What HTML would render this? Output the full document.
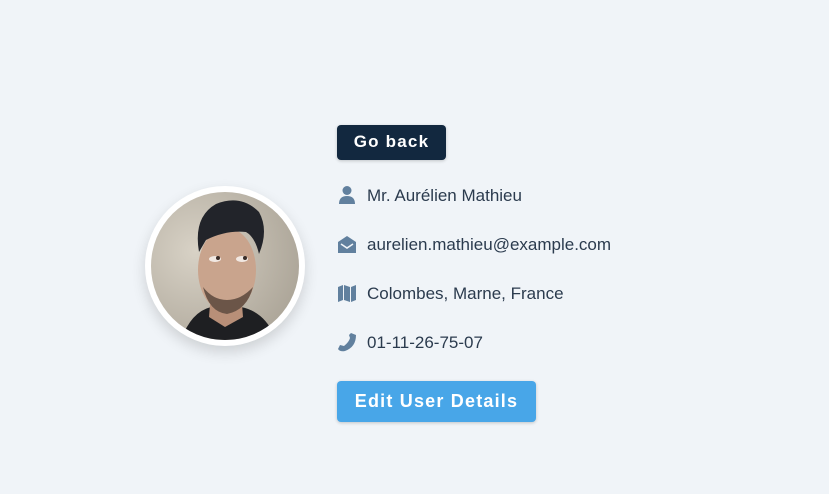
<!DOCTYPE html>
<html><head><style>
html,body{margin:0;padding:0;width:829px;height:494px;background:#f0f4f8;overflow:hidden;font-family:"Liberation Sans",sans-serif}
.av{position:absolute;left:145px;top:186px;width:160px;height:160px;border-radius:50%;background:#fff;box-shadow:0 6px 14px rgba(0,0,0,.15)}
.av svg{position:absolute;left:6px;top:6px}
.btn{position:absolute;left:337px;border-radius:4px;color:#fff;font-weight:bold;letter-spacing:1.2px;text-align:center;box-shadow:0 1px 3px rgba(0,0,0,.2)}
.b1{top:125px;width:109px;height:35px;line-height:34px;background:#12283f;font-size:17px}
.b2{top:381px;width:199px;height:41px;line-height:40px;background:#48a6e8;font-size:18px}
.row{position:absolute;left:337px;height:24px;line-height:24px;font-size:17px;color:#2b3b4e}
.row svg{position:absolute;left:0;top:2px}
.row span{position:absolute;left:30px;top:1px;white-space:nowrap}
</style></head><body>
<div class="av"><svg width="148" height="148" viewBox="0 0 148 148">
<defs><clipPath id="c"><circle cx="74" cy="74" r="74"/></clipPath>
<radialGradient id="bg" cx="0.3" cy="0.4" r="0.8"><stop offset="0" stop-color="#d8d2c6"/><stop offset="1" stop-color="#a9a295"/></radialGradient></defs>
<g clip-path="url(#c)">
<rect width="148" height="148" fill="url(#bg)"/>
<path d="M30 148 Q40 120 60 115 L90 115 Q115 120 125 148Z" fill="#1e1f22"/>
<path d="M60 100 L90 100 L92 125 L74 135 L58 125Z" fill="#b88f78"/>
<ellipse cx="76" cy="78" rx="29" ry="42" fill="#c9a48d"/>
<path d="M48 60 Q42 25 65 12 Q90 2 108 20 Q118 38 108 62 Q104 45 95 40 Q75 38 55 48Z" fill="#22242a"/>
<path d="M52 95 Q58 120 76 122 Q96 118 102 95 Q90 108 76 108 Q62 108 52 95Z" fill="#6b5548"/>
<ellipse cx="64" cy="67" rx="6" ry="3" fill="#f1e8e2"/><ellipse cx="91" cy="67" rx="6" ry="3" fill="#f1e8e2"/>
<circle cx="67" cy="66" r="2" fill="#3a2d28"/><circle cx="94" cy="66" r="2" fill="#3a2d28"/>
</g></svg></div>
<div class="btn b1">Go back</div>
<div class="row" style="top:183px"><svg width="20" height="20" viewBox="0 0 20 20"><circle cx="10" cy="5.5" r="4.5" fill="#61809e"/><path d="M2 19 Q2 11 10 11 Q18 11 18 19Z" fill="#61809e"/></svg><span>Mr. Aurélien Mathieu</span></div>
<div class="row" style="top:232px"><svg width="20" height="20" viewBox="0 0 20 20"><path d="M1 8 L10 2 L19 8 L19 19 L1 19Z" fill="#61809e"/><path d="M4 10 L10 14 L16 10" stroke="#f0f4f8" stroke-width="1.6" fill="none"/></svg><span>aurelien.mathieu@example.com</span></div>
<div class="row" style="top:281px"><svg width="20" height="20" viewBox="0 0 20 20"><path d="M1 4 L6 2 L6 17 L1 19Z M7 2 L13 4 L13 19 L7 17Z M14 4 L19 2 L19 17 L14 19Z" fill="#61809e"/></svg><span>Colombes, Marne, France</span></div>
<div class="row" style="top:330px"><svg width="20" height="20" viewBox="0 0 20 20"><path d="M14 1 L19 3 Q19 15 8 19 Q3 20 1 17 L3 13 L7 14 Q12 10 13 6 L12 3Z" fill="#61809e"/></svg><span>01-11-26-75-07</span></div>
<div class="btn b2">Edit User Details</div>
</body></html>
